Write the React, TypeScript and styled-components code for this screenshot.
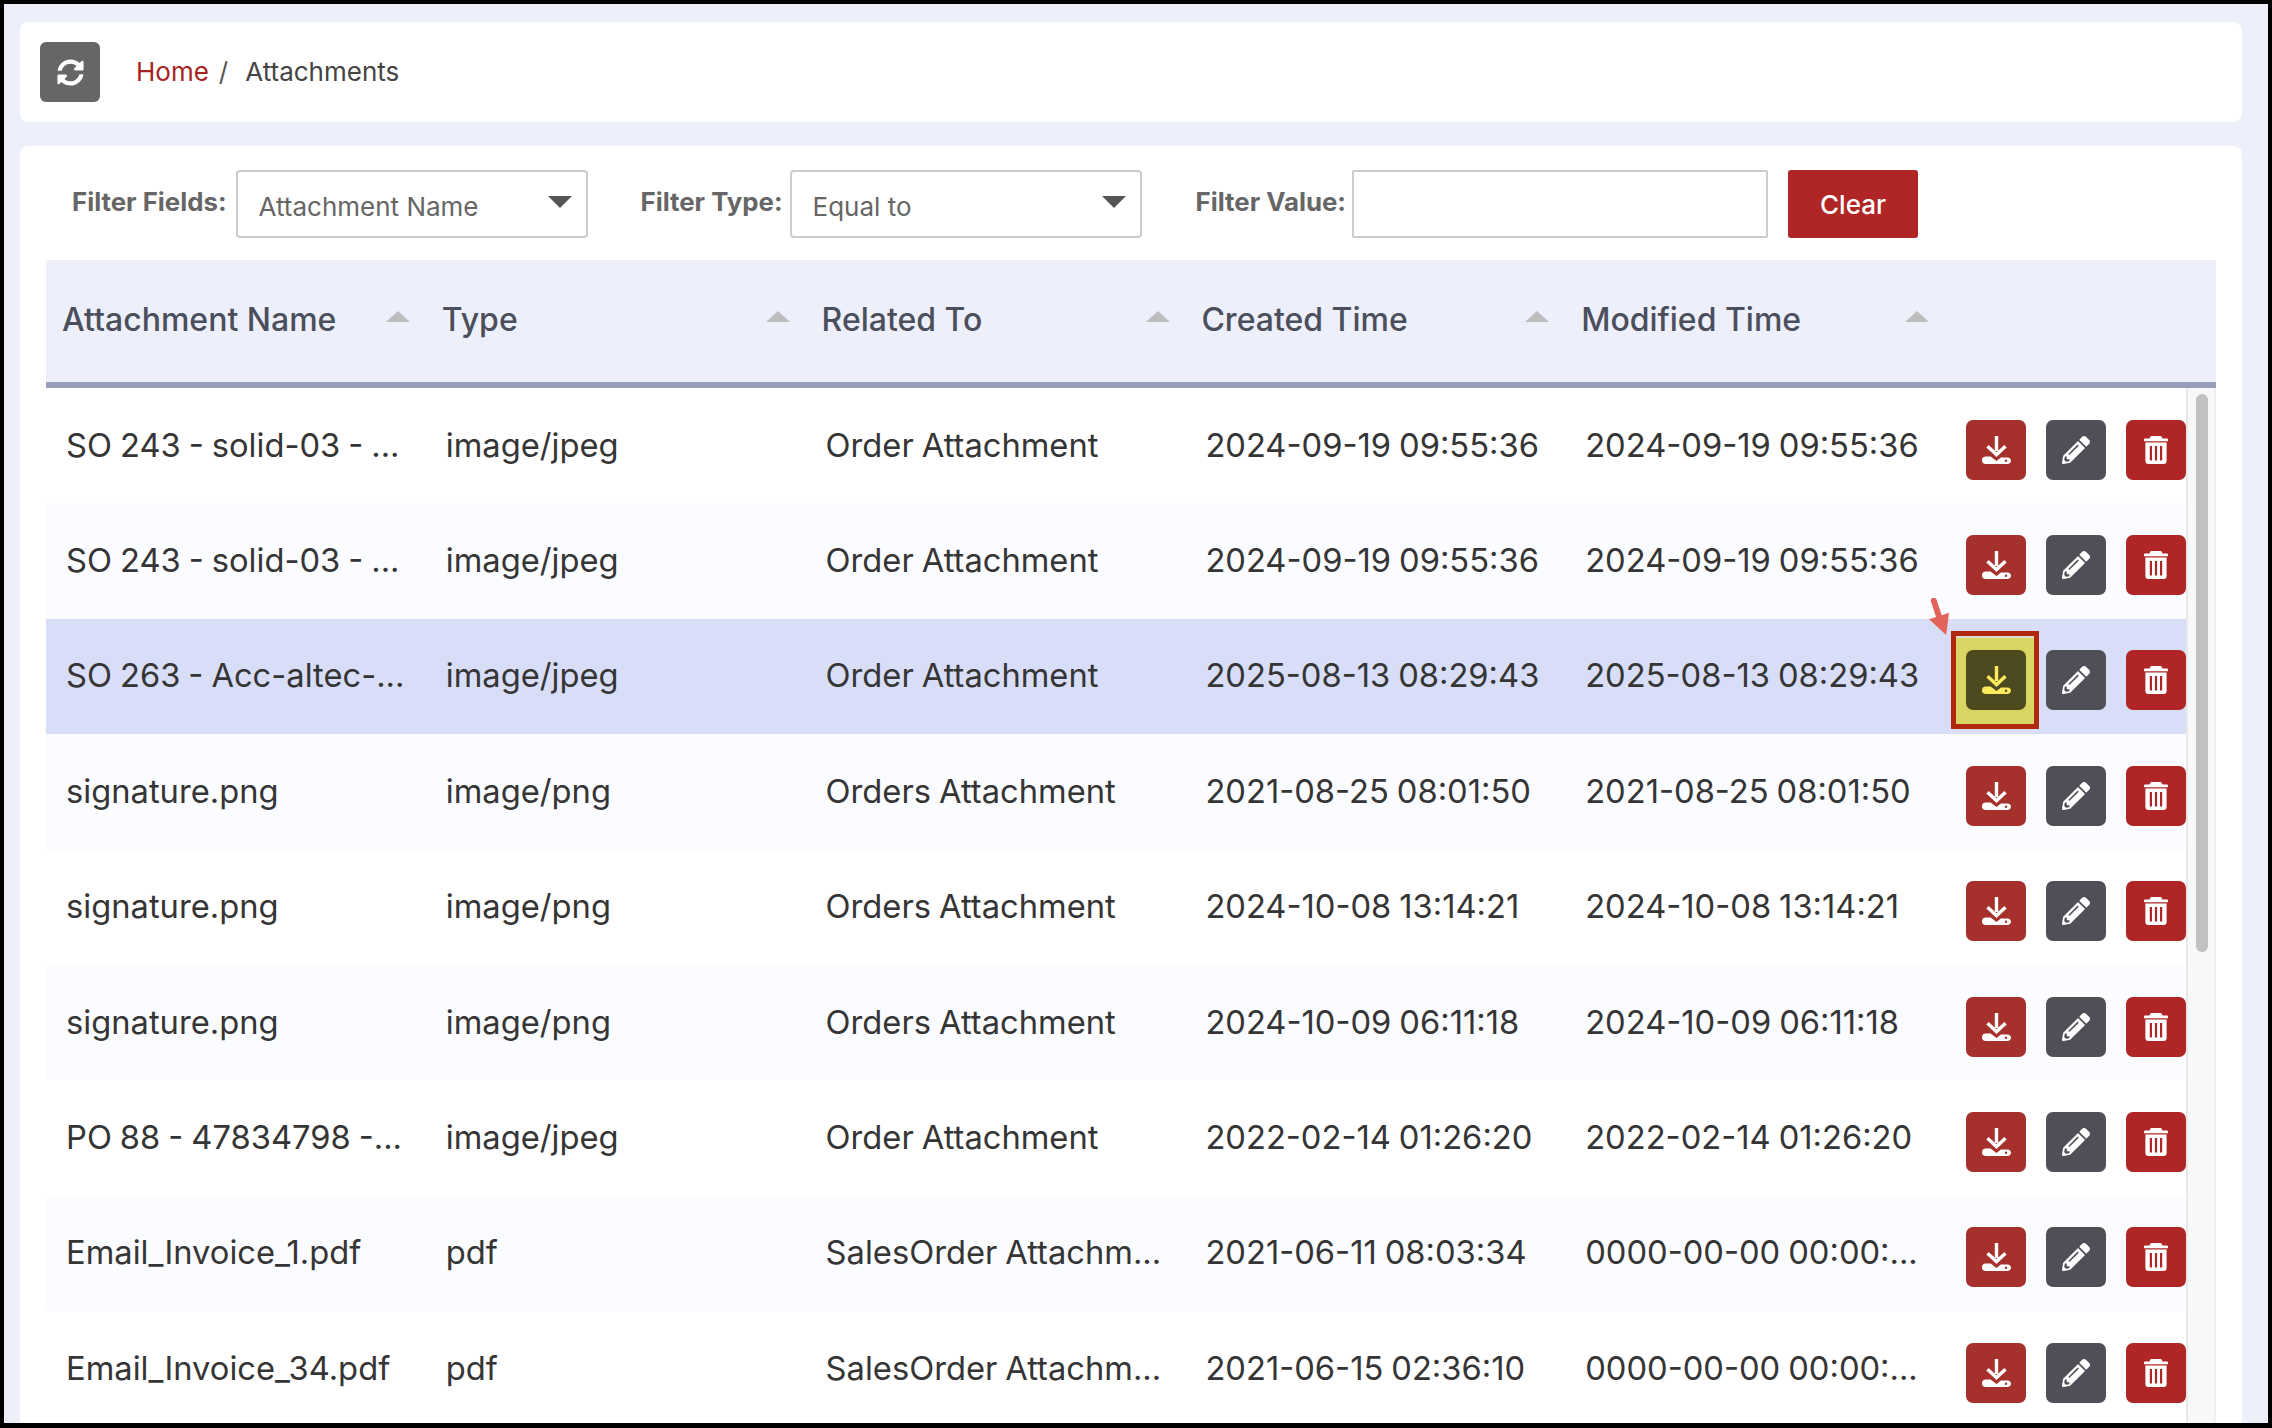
import { FC } from "react";
import styled, { createGlobalStyle } from "styled-components";
import { FaPencilAlt, FaSyncAlt } from "react-icons/fa";

interface RowI {
  name: string;
  type: string;
  related: string;
  created: string;
  modified: string;
}

const rows: RowI[] = [
  { name: "SO 243 - solid-03 - ...", type: "image/jpeg", related: "Order Attachment", created: "2024-09-19 09:55:36", modified: "2024-09-19 09:55:36" },
  { name: "SO 243 - solid-03 - ...", type: "image/jpeg", related: "Order Attachment", created: "2024-09-19 09:55:36", modified: "2024-09-19 09:55:36" },
  { name: "SO 263 - Acc-altec-...", type: "image/jpeg", related: "Order Attachment", created: "2025-08-13 08:29:43", modified: "2025-08-13 08:29:43" },
  { name: "signature.png", type: "image/png", related: "Orders Attachment", created: "2021-08-25 08:01:50", modified: "2021-08-25 08:01:50" },
  { name: "signature.png", type: "image/png", related: "Orders Attachment", created: "2024-10-08 13:14:21", modified: "2024-10-08 13:14:21" },
  { name: "signature.png", type: "image/png", related: "Orders Attachment", created: "2024-10-09 06:11:18", modified: "2024-10-09 06:11:18" },
  { name: "PO 88 - 47834798 -...", type: "image/jpeg", related: "Order Attachment", created: "2022-02-14 01:26:20", modified: "2022-02-14 01:26:20" },
  { name: "Email_Invoice_1.pdf", type: "pdf", related: "SalesOrder Attachm...", created: "2021-06-11 08:03:34", modified: "0000-00-00 00:00:..." },
  { name: "Email_Invoice_34.pdf", type: "pdf", related: "SalesOrder Attachm...", created: "2021-06-15 02:36:10", modified: "0000-00-00 00:00:..." },
];

const columns = ["Attachment Name", "Type", "Related To", "Created Time", "Modified Time"];

const GlobalStyle = createGlobalStyle`
  html, body {
    margin: 0;
    padding: 0;
    background: #000;
  }
  * {
    box-sizing: border-box;
  }
`;

const Frame = styled.div`
  width: 2272px;
  height: 1428px;
  padding: 4px 4px 5px 4px;
  background: #000;
  font-family: Inter, "Noto Sans", sans-serif;
  overflow: hidden;
`;

const Page = styled.div`
  height: 100%;
  padding: 18px 26px 0 16px;
  background: #edf0fb;
  display: flex;
  flex-direction: column;
  gap: 24px;
`;

const BreadcrumbBar = styled.div`
  height: 100px;
  flex: none;
  display: flex;
  align-items: center;
  padding-left: 20px;
  background: #fff;
  border-radius: 8px;
  font-size: 26px;
  color: #444;
`;

const RefreshButton = styled.button`
  width: 60px;
  height: 60px;
  margin-right: 36px;
  padding: 0;
  border: 0;
  border-radius: 6px;
  background: #666;
  color: #fff;
  display: flex;
  align-items: center;
  justify-content: center;
  font-size: 27px;
`;

const Crumbs = styled.div`
  padding-bottom: 2px;
  display: flex;
`;

const HomeLink = styled.a`
  color: #a82323;
`;

const Separator = styled.span`
  margin: 0 17px 0 10px;
  color: #555;
`;

const MainCard = styled.div`
  flex: 1;
  min-height: 0;
  padding: 24px 26px 0 26px;
  background: #fff;
  border-radius: 8px 8px 0 0;
  display: flex;
  flex-direction: column;
  overflow: hidden;
`;

const FilterRow = styled.div`
  height: 68px;
  flex: none;
  margin-bottom: 22px;
  padding-left: 26px;
  display: flex;
  align-items: center;
`;

const FilterLabel = styled.label<{ $gap: number }>`
  margin-right: ${(p) => p.$gap}px;
  padding-bottom: 5px;
  font-size: 25.8px;
  font-weight: 700;
  color: #666;
  white-space: nowrap;
`;

const SelectBox = styled.div<{ $gap: number }>`
  width: 352px;
  height: 68px;
  margin-right: ${(p) => p.$gap}px;
  padding: 4px 14px 0 21px;
  border: 2px solid #ccc;
  border-radius: 4px;
  display: flex;
  align-items: center;
  justify-content: space-between;
  font-size: 26px;
  color: #666;
`;

const Caret = styled.span`
  width: 0;
  height: 0;
  margin-bottom: 8px;
  border-left: 12px solid transparent;
  border-right: 12px solid transparent;
  border-top: 12px solid #555;
`;

const ValueInput = styled.input`
  width: 416px;
  height: 68px;
  margin-right: 20px;
  border: 2px solid #ccc;
  border-radius: 2px;
  background: #fff;
`;

const ClearButton = styled.button`
  width: 130px;
  height: 68px;
  border: 0;
  border-radius: 3px;
  background: #b02626;
  color: #fff;
  font-family: inherit;
  font-size: 26px;
  font-weight: 500;
`;

const HeaderRow = styled.div`
  height: 128px;
  flex: none;
  display: grid;
  grid-template-columns: repeat(5, 379.8px) 1fr;
  background: #edf0fb;
  border-bottom: 6px solid #989fbb;
`;

const HeaderCell = styled.div`
  padding: 0 0 3px 16px;
  display: flex;
  align-items: center;
  font-size: 32px;
  font-weight: 500;
  color: #4b4e5b;
  position: relative;
`;

const SortArrow = styled.span`
  position: absolute;
  left: 340px;
  top: 51px;
  width: 0;
  height: 0;
  border-left: 12px solid transparent;
  border-right: 12px solid transparent;
  border-bottom: 11px solid #bdbdbd;
`;

const TableBody = styled.div`
  flex: 1;
  min-height: 0;
  display: flex;
  overflow: hidden;
`;

const RowList = styled.div`
  flex: 1;
  min-width: 0;
`;

const Row = styled.div<{ $bg: string }>`
  height: 115.4px;
  display: grid;
  grid-template-columns: repeat(5, 379.8px) 1fr;
  align-items: center;
  background: ${(p) => p.$bg};
`;

const Cell = styled.div`
  padding: 0 0 2px 20px;
  font-size: 32.7px;
  word-spacing: -1.2px;
  color: #353535;
  white-space: nowrap;
`;

const Actions = styled.div`
  height: 60px;
  margin-top: 8px;
  margin-left: -12px;
  display: flex;
  justify-content: flex-end;
  gap: 20px;
`;

const ActionWrap = styled.div`
  position: relative;
`;

const ActionButton = styled.button<{ $bg: string; $fg?: string }>`
  position: relative;
  width: 60px;
  height: 60px;
  padding: 0;
  border: 0;
  border-radius: 7px;
  background: ${(p) => p.$bg};
  color: ${(p) => p.$fg || "#fff"};
  display: flex;
  align-items: center;
  justify-content: center;
`;

const Highlight = styled.div`
  position: absolute;
  left: -15px;
  top: -19px;
  width: 88px;
  height: 98px;
  background: #d8d763;
  border: 5px solid #b0290f;
  box-shadow: inset 0 2px 0 #dcdcd0;
`;

const PointerArrow = styled.svg`
  position: absolute;
  left: -37px;
  top: -52px;
  width: 20px;
  height: 37px;
`;

const ScrollTrack = styled.div`
  width: 30px;
  flex: none;
  padding: 6px 6px 0 8px;
  background: #f8f8f8;
  border-left: 2px solid #e8e8e8;
  border-right: 2px solid #efefef;
`;

const ScrollThumb = styled.div`
  height: 558px;
  border-radius: 8px;
  background: #c1c1c1;
`;

const DownloadIcon: FC = () => (
  <svg width="29" height="28" viewBox="0 0 29 28" fill="currentColor">
    <rect x="12.8" y="0" width="3.4" height="15" />
    <path d="M5.5 10.2 14.5 18.6 23.5 10.2" fill="none" stroke="currentColor" strokeWidth="3.4" />
    <path
      fillRule="evenodd"
      d="M3.8 20.4H8.6L14.5 25 18.9 21.6H25A3.2 3.2 0 0 1 29 24.6 3.3 3.3 0 0 1 25.4 28H3.8A3.8 3.8 0 0 1 3.8 20.4ZM24 23.6A1.2 1.2 0 1 0 24 26 1.2 1.2 0 1 0 24 23.6Z"
    />
  </svg>
);

const TrashIcon: FC = () => (
  <svg width="24" height="28" viewBox="0 0 24 28" fill="currentColor">
    <path d="M5.5 2.4 6.8 0H17.2L18.5 2.4H23A1 1 0 0 1 24 3.4V5.2H0V3.4A1 1 0 0 1 1 2.4Z" />
    <path
      fillRule="evenodd"
      d="M1.4 6.6H22.6V25A3 3 0 0 1 19.6 28H4.4A3 3 0 0 1 1.4 25ZM5.8 10V24.4H8V10ZM10.9 10V24.4H13.1V10ZM16 10V24.4H18.2V10Z"
    />
  </svg>
);

const App: FC = () => {
  return (
    <Frame>
      <GlobalStyle />
      <Page>
        <BreadcrumbBar>
          <RefreshButton>
            <FaSyncAlt />
          </RefreshButton>
          <Crumbs>
            <HomeLink>Home</HomeLink>
            <Separator>/</Separator>
            <span>Attachments</span>
          </Crumbs>
        </BreadcrumbBar>
        <MainCard>
          <FilterRow>
            <FilterLabel $gap={9}>Filter Fields:</FilterLabel>
            <SelectBox $gap={53}>
              Attachment Name
              <Caret />
            </SelectBox>
            <FilterLabel $gap={7}>Filter Type:</FilterLabel>
            <SelectBox $gap={54}>
              Equal to
              <Caret />
            </SelectBox>
            <FilterLabel $gap={6}>Filter Value:</FilterLabel>
            <ValueInput />
            <ClearButton>Clear</ClearButton>
          </FilterRow>
          <HeaderRow>
            {columns.map((c) => (
              <HeaderCell key={c}>
                {c}
                <SortArrow />
              </HeaderCell>
            ))}
            <div />
          </HeaderRow>
          <TableBody>
            <RowList>
              {rows.map((r, i) => (
                <Row key={i} $bg={i === 2 ? "#d9def8" : i % 2 === 1 ? "#fbfcff" : "#fff"}>
                  <Cell>{r.name}</Cell>
                  <Cell>{r.type}</Cell>
                  <Cell>{r.related}</Cell>
                  <Cell>{r.created}</Cell>
                  <Cell>{r.modified}</Cell>
                  <Actions>
                    <ActionWrap>
                      {i === 2 && (
                        <>
                          <Highlight />
                          <PointerArrow viewBox="0 0 20 37">
                            <path d="M1.8 3A3 3 0 0 1 7.4 1.2L12.8 17.2 20 14.8 17.2 37 0 21.2 7 19Z" fill="#e2635a" />
                          </PointerArrow>
                        </>
                      )}
                      <ActionButton $bg={i === 2 ? "#4e4a20" : "#a6302b"} $fg={i === 2 ? "#ffe95c" : undefined}>
                        <DownloadIcon />
                      </ActionButton>
                    </ActionWrap>
                    <ActionButton $bg="#4f5057">
                      <FaPencilAlt size={28} />
                    </ActionButton>
                    <ActionButton $bg="#b02626">
                      <TrashIcon />
                    </ActionButton>
                  </Actions>
                </Row>
              ))}
            </RowList>
            <ScrollTrack>
              <ScrollThumb />
            </ScrollTrack>
          </TableBody>
        </MainCard>
      </Page>
    </Frame>
  );
};

export default App;
